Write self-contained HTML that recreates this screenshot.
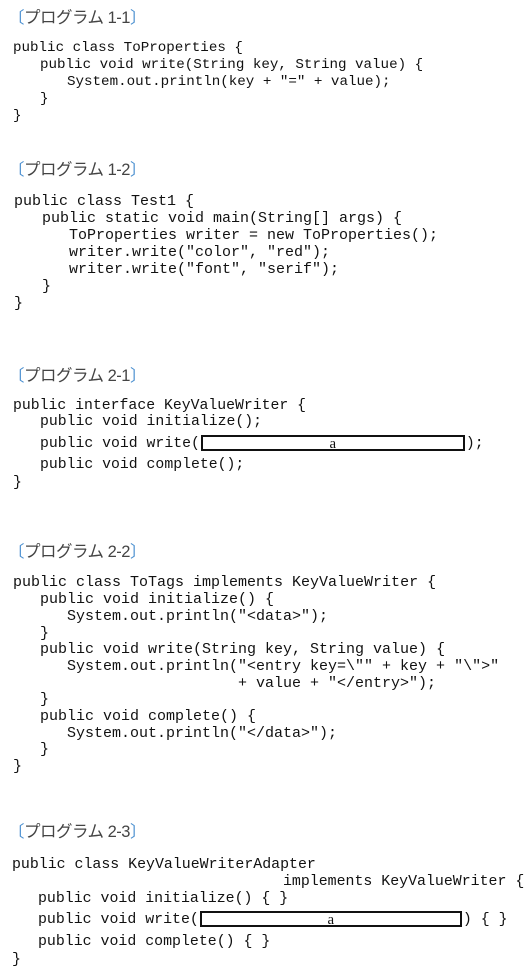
<!DOCTYPE html>
<html><head><meta charset="utf-8"><style>
body{margin:0;width:532px;height:974px;background:#fff;position:relative;overflow:hidden}
.l{position:absolute;font-family:"Liberation Mono",monospace;font-size:14.2px;line-height:18px;height:18px;white-space:pre;color:#111}
.b2 .l{font-size:15px}
.b3 .l{font-size:14.8px}
.b4 .l{font-size:15px}
.b5 .l{font-size:14.9px}
.t{position:absolute;left:8px;font-family:"Liberation Sans","Noto Sans CJK JP",sans-serif;font-size:16.5px;line-height:20px;color:#444;letter-spacing:-0.5px}
.t b{color:#4a8fd0;font-weight:normal}
.box{display:inline-block;border:2px solid #111;height:16px;vertical-align:top;text-align:center;line-height:15px;box-sizing:border-box;font-family:"Liberation Serif",serif;margin-left:1px;margin-right:1px}
</style></head><body>
<div class="t" style="top:8px"><b>〔</b>プログラム 1-1<b>〕</b></div>
<div class="l" style="left:13px;top:39px">public class ToProperties {</div>
<div class="l" style="left:40px;top:56px">public void write(String key, String value) {</div>
<div class="l" style="left:67px;top:73px">System.out.println(key + "=" + value);</div>
<div class="l" style="left:40px;top:90px">}</div>
<div class="l" style="left:13px;top:107px">}</div>

<div class="t" style="top:160px"><b>〔</b>プログラム 1-2<b>〕</b></div>
<div class="b2">
<div class="l" style="left:14px;top:193px">public class Test1 {</div>
<div class="l" style="left:42px;top:210px">public static void main(String[] args) {</div>
<div class="l" style="left:69px;top:227px">ToProperties writer = new ToProperties();</div>
<div class="l" style="left:69px;top:244px">writer.write("color", "red");</div>
<div class="l" style="left:69px;top:261px">writer.write("font", "serif");</div>
<div class="l" style="left:42px;top:278px">}</div>
<div class="l" style="left:14px;top:295px">}</div>
</div>

<div class="t" style="top:366px"><b>〔</b>プログラム 2-1<b>〕</b></div>
<div class="b3">
<div class="l" style="left:13px;top:397px">public interface KeyValueWriter {</div>
<div class="l" style="left:40px;top:413px">public void initialize();</div>
<div class="l" style="left:40px;top:435px">public void write(<span class="box" style="width:264px">a</span>);</div>
<div class="l" style="left:40px;top:456px">public void complete();</div>
<div class="l" style="left:13px;top:474px">}</div>
</div>

<div class="t" style="top:542px"><b>〔</b>プログラム 2-2<b>〕</b></div>
<div class="b4">
<div class="l" style="left:13px;top:574px">public class ToTags implements KeyValueWriter {</div>
<div class="l" style="left:40px;top:591px">public void initialize() {</div>
<div class="l" style="left:67px;top:608px">System.out.println("&lt;data&gt;");</div>
<div class="l" style="left:40px;top:625px">}</div>
<div class="l" style="left:40px;top:641px">public void write(String key, String value) {</div>
<div class="l" style="left:67px;top:658px">System.out.println("&lt;entry key=\"" + key + "\"&gt;"</div>
<div class="l" style="left:238px;top:675px">+ value + "&lt;/entry&gt;");</div>
<div class="l" style="left:40px;top:691px">}</div>
<div class="l" style="left:40px;top:708px">public void complete() {</div>
<div class="l" style="left:67px;top:725px">System.out.println("&lt;/data&gt;");</div>
<div class="l" style="left:40px;top:741px">}</div>
<div class="l" style="left:13px;top:758px">}</div>
</div>

<div class="t" style="top:822px"><b>〔</b>プログラム 2-3<b>〕</b></div>
<div class="b5">
<div class="l" style="left:12px;top:856px">public class KeyValueWriterAdapter</div>
<div class="l" style="left:283px;top:873px">implements KeyValueWriter {</div>
<div class="l" style="left:38px;top:890px">public void initialize() { }</div>
<div class="l" style="left:38px;top:911px">public void write(<span class="box" style="width:262px">a</span>) { }</div>
<div class="l" style="left:38px;top:933px">public void complete() { }</div>
<div class="l" style="left:12px;top:951px">}</div>
</div>
</body></html>
